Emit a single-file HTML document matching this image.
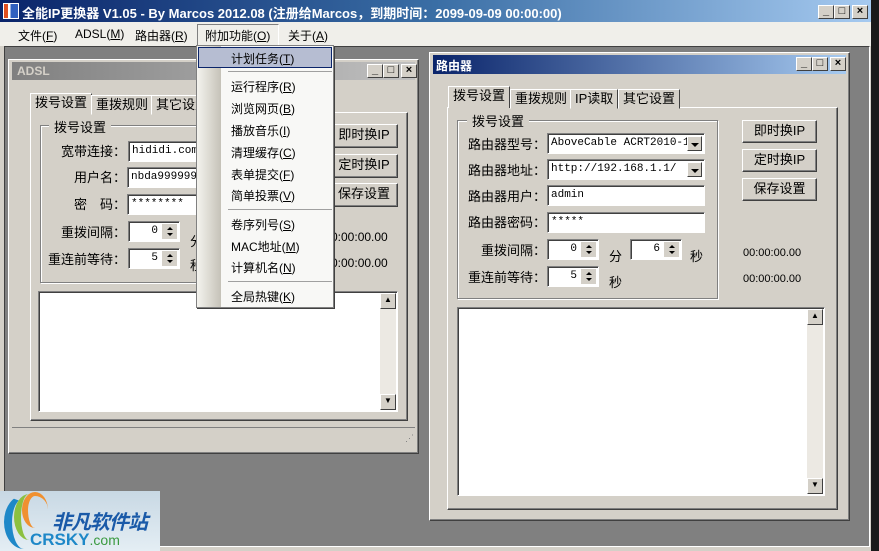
<!DOCTYPE html>
<html><head><meta charset="utf-8"><style>
*{margin:0;padding:0;box-sizing:border-box}
body{width:879px;height:551px;overflow:hidden;background:#d4d0c8;font-family:"Liberation Sans","Noto Sans CJK SC","WenQuanYi Zen Hei",sans-serif;font-size:12px;color:#000;position:relative}
.a{position:absolute}
.raised{background:#d4d0c8;border:1px solid;border-color:#fff #404040 #404040 #fff;box-shadow:inset -1px -1px #808080}
.sunk{background:#fff;border:1px solid;border-color:#808080 #fff #fff #808080;box-shadow:inset 1px 1px #404040}
.btn{position:absolute;background:#d4d0c8;border:1px solid;border-color:#fff #404040 #404040 #fff;box-shadow:inset -1px -1px #808080;text-align:center;font-size:13px;line-height:20px}
.tb{position:absolute;width:16px;height:14px;background:#d4d0c8;border:1px solid;border-color:#fff #404040 #404040 #fff;font-size:11px;line-height:11px;text-align:center;font-weight:bold}
.grp{position:absolute;border:1px solid #808080;box-shadow:1px 1px #fff,inset 1px 1px #fff}
.gl{position:absolute;background:#d4d0c8;padding:0 5px;font-size:13px}
.lbl{position:absolute;font-size:13px;text-align:right}
.in{position:absolute;background:#fff;border:1px solid;border-color:#808080 #fff #fff #808080;box-shadow:inset 1px 1px #404040;font-family:"Liberation Mono","Noto Sans CJK SC",monospace;font-size:11px;line-height:19px;padding-left:3px;white-space:nowrap;overflow:hidden}
.spin{position:absolute;width:16px;right:2px;top:2px;bottom:2px;background:#d4d0c8;border-left:1px solid #fff}
.spin:before{content:"";position:absolute;left:5px;top:3px;border:3px solid transparent;border-bottom:3px solid #000;border-top:0}
.spin:after{content:"";position:absolute;left:5px;bottom:3px;border:3px solid transparent;border-top:3px solid #000;border-bottom:0}
.dd{position:absolute;width:15px;right:2px;top:2px;bottom:2px;background:#d4d0c8;border:1px solid;border-color:#fff #404040 #404040 #fff}
.dd:after{content:"";position:absolute;left:3px;top:6px;border:4px solid transparent;border-top:4px solid #000;border-bottom:0}
.tab{position:absolute;font-size:13px;border:1px solid;border-color:#fff #404040 transparent #fff;background:#d4d0c8;height:20px;line-height:18px;padding:0 4px}
.mi{position:absolute;left:34px;font-size:12px}
</style></head><body>
<div class="a" style="left:871px;top:0;width:8px;height:551px;background:#1a1a1a"></div>
<div class="a" style="left:0;top:0;width:871px;height:22px;background:linear-gradient(90deg,#0a246a,#3a6ea5 50%,#a6caf0)"></div>
<div class="a" style="left:3px;top:3px;width:16px;height:16px;background:linear-gradient(90deg,#e05020 0 30%,#fff 30% 45%,#3060c0 45%);border:1px solid #fff"></div>
<div class="a" style="left:22px;top:3px;color:#fff;font-weight:bold;font-size:13px;white-space:nowrap">全能IP更换器 V1.05 - By Marcos 2012.08 (注册给Marcos，到期时间：2099-09-09 00:00:00)</div>
<div class="tb" style="left:818px;top:5px">_</div><div class="tb" style="left:834px;top:5px">□</div><div class="tb" style="left:852px;top:5px">×</div>
<div class="a" style="left:0;top:22px;width:871px;height:24px;background:#f0efea"></div>
<div class="a" style="left:18px;top:27px;font-size:12px">文件(<u>F</u>)</div>
<div class="a" style="left:75px;top:27px;font-size:12px">ADSL(<u>M</u>)</div>
<div class="a" style="left:135px;top:27px;font-size:12px">路由器(<u>R</u>)</div>
<div class="a" style="left:197px;top:24px;width:82px;height:22px;border:1px solid;border-color:#808080 #fff #fff #808080"></div>
<div class="a" style="left:205px;top:27px;font-size:12px">附加功能(<u>O</u>)</div>
<div class="a" style="left:288px;top:27px;font-size:12px">关于(<u>A</u>)</div>
<div class="a" style="left:4px;top:46px;width:866px;height:501px;background:#808080;border:1px solid;border-color:#404040 #fff #fff #404040"></div>
<div class="a" style="left:0;top:547px;width:871px;height:4px;background:#d4d0c8"></div>

<div class="a raised" style="left:8px;top:59px;width:411px;height:395px"></div>
<div class="a" style="left:12px;top:62px;width:403px;height:18px;background:linear-gradient(90deg,#808080,#c0c0c0)"></div>
<div class="a" style="left:17px;top:64px;color:#d4d0c8;font-weight:bold">ADSL</div>
<div class="tb" style="left:367px;top:64px">_</div><div class="tb" style="left:383px;top:64px">□</div><div class="tb" style="left:401px;top:64px">×</div>
<div class="a raised" style="left:30px;top:112px;width:378px;height:309px"></div>
<div class="tab" style="left:30px;top:93px;height:21px;border-bottom:none">拨号设置</div>
<div class="tab" style="left:91px;top:95px">重拨规则</div>
<div class="tab" style="left:151px;top:95px">其它设置</div>
<div class="grp" style="left:40px;top:125px;width:290px;height:158px"></div>
<div class="gl" style="left:49px;top:117px">拨号设置</div>
<div class="lbl" style="left:50px;top:141px;width:76px">宽带连接：</div>
<div class="in" style="left:128px;top:141px;width:80px;height:21px">hididi.com</div>
<div class="lbl" style="left:50px;top:167px;width:76px">用户名：</div>
<div class="in" style="left:127px;top:167px;width:80px;height:21px">nbda99999999</div>
<div class="lbl" style="left:50px;top:194px;width:76px">密　码：</div>
<div class="in" style="left:127px;top:194px;width:80px;height:21px">********</div>
<div class="lbl" style="left:40px;top:222px;width:86px">重拨间隔：</div>
<div class="in" style="left:128px;top:221px;width:52px;height:21px;text-align:right;padding-right:21px">0<div class="spin"></div></div>
<div class="a" style="left:190px;top:231px;font-size:13px">分</div>
<div class="lbl" style="left:40px;top:249px;width:86px">重连前等待：</div>
<div class="in" style="left:128px;top:248px;width:52px;height:21px;text-align:right;padding-right:21px">5<div class="spin"></div></div>
<div class="a" style="left:190px;top:255px;font-size:13px">秒</div>
<div class="btn" style="left:330px;top:124px;width:68px;height:24px">即时换IP</div>
<div class="btn" style="left:330px;top:154px;width:68px;height:24px">定时换IP</div>
<div class="btn" style="left:330px;top:183px;width:68px;height:24px">保存设置</div>
<div class="a" style="left:331px;top:230px;font-size:12px">0:00:00.00</div>
<div class="a" style="left:331px;top:256px;font-size:12px">0:00:00.00</div>
<div class="a sunk" style="left:38px;top:291px;width:360px;height:121px"></div>
<div class="a" style="left:380px;top:293px;width:16px;height:117px;background:#ece9e3"></div>
<div class="tb" style="left:380px;top:293px;width:16px;height:16px;font-size:8px">▲</div>
<div class="tb" style="left:380px;top:394px;width:16px;height:16px;font-size:8px">▼</div>
<div class="a" style="left:12px;top:427px;width:403px;height:1px;background:#fff;border-top:1px solid #808080"></div>
<div class="a" style="left:405px;top:433px;color:#808080;font-size:9px">⋰</div>

<div class="a raised" style="left:429px;top:52px;width:421px;height:469px"></div>
<div class="a" style="left:433px;top:55px;width:413px;height:19px;background:linear-gradient(90deg,#0a246a,#a6caf0)"></div>
<div class="a" style="left:436px;top:57px;color:#fff;font-weight:bold;font-size:12px">路由器</div>
<div class="tb" style="left:796px;top:57px">_</div><div class="tb" style="left:812px;top:57px">□</div><div class="tb" style="left:830px;top:57px">×</div>
<div class="a raised" style="left:447px;top:107px;width:391px;height:403px"></div>
<div class="tab" style="left:448px;top:86px;height:22px;border-bottom:none">拨号设置</div>
<div class="tab" style="left:510px;top:89px">重拨规则</div>
<div class="tab" style="left:570px;top:89px">IP读取</div>
<div class="tab" style="left:618px;top:89px">其它设置</div>
<div class="grp" style="left:457px;top:120px;width:261px;height:179px"></div>
<div class="gl" style="left:467px;top:111px">拨号设置</div>
<div class="lbl" style="left:460px;top:134px;width:86px">路由器型号：</div>
<div class="in" style="left:547px;top:133px;width:158px;height:21px">AboveCable ACRT2010-11<div class="dd"></div></div>
<div class="lbl" style="left:460px;top:160px;width:86px">路由器地址：</div>
<div class="in" style="left:547px;top:159px;width:158px;height:21px">http://192.168.1.1/<div class="dd"></div></div>
<div class="lbl" style="left:460px;top:186px;width:86px">路由器用户：</div>
<div class="in" style="left:547px;top:185px;width:158px;height:21px">admin</div>
<div class="lbl" style="left:460px;top:212px;width:86px">路由器密码：</div>
<div class="in" style="left:547px;top:212px;width:158px;height:21px">*****</div>
<div class="lbl" style="left:460px;top:240px;width:86px">重拨间隔：</div>
<div class="in" style="left:547px;top:239px;width:52px;height:21px;text-align:right;padding-right:21px">0<div class="spin"></div></div>
<div class="a" style="left:609px;top:246px;font-size:13px">分</div>
<div class="in" style="left:630px;top:239px;width:52px;height:21px;text-align:right;padding-right:21px">6<div class="spin"></div></div>
<div class="a" style="left:690px;top:246px;font-size:13px">秒</div>
<div class="lbl" style="left:460px;top:267px;width:86px">重连前等待：</div>
<div class="in" style="left:547px;top:266px;width:52px;height:21px;text-align:right;padding-right:21px">5<div class="spin"></div></div>
<div class="a" style="left:609px;top:272px;font-size:13px">秒</div>
<div class="btn" style="left:742px;top:120px;width:75px;height:23px">即时换IP</div>
<div class="btn" style="left:742px;top:149px;width:75px;height:23px">定时换IP</div>
<div class="btn" style="left:742px;top:178px;width:75px;height:23px">保存设置</div>
<div class="a" style="left:743px;top:247px;font-size:11px">00:00:00.00</div>
<div class="a" style="left:743px;top:273px;font-size:11px">00:00:00.00</div>
<div class="a sunk" style="left:457px;top:307px;width:368px;height:189px"></div>
<div class="a" style="left:807px;top:309px;width:16px;height:185px;background:#ece9e3"></div>
<div class="tb" style="left:807px;top:309px;width:16px;height:16px;font-size:8px">▲</div>
<div class="tb" style="left:807px;top:478px;width:16px;height:16px;font-size:8px">▼</div>

<div class="a" style="left:196px;top:45px;width:138px;height:263px;background:#f8f8f6;border:1px solid #808080;box-shadow:1px 1px #404040"></div>
<div class="a" style="left:197px;top:46px;width:24px;height:261px;background:linear-gradient(90deg,#f4f3ee,#c5c2b8)"></div>
<div class="a" style="left:198px;top:47px;width:134px;height:21px;background:#b6bdd2;border:1px solid #0a246a"></div>
<div class="mi" style="left:231px;top:50px">计划任务(<u>T</u>)</div>
<div class="a" style="left:228px;top:71px;width:104px;height:1px;background:#a0a0a0"></div>
<div class="mi" style="left:231px;top:78px">运行程序(<u>R</u>)</div>
<div class="mi" style="left:231px;top:100px">浏览网页(<u>B</u>)</div>
<div class="mi" style="left:231px;top:122px">播放音乐(<u>I</u>)</div>
<div class="mi" style="left:231px;top:144px">清理缓存(<u>C</u>)</div>
<div class="mi" style="left:231px;top:166px">表单提交(<u>F</u>)</div>
<div class="mi" style="left:231px;top:187px">简单投票(<u>V</u>)</div>
<div class="a" style="left:228px;top:209px;width:104px;height:1px;background:#a0a0a0"></div>
<div class="mi" style="left:231px;top:216px">卷序列号(<u>S</u>)</div>
<div class="mi" style="left:231px;top:238px">MAC地址(<u>M</u>)</div>
<div class="mi" style="left:231px;top:259px">计算机名(<u>N</u>)</div>
<div class="a" style="left:228px;top:281px;width:104px;height:1px;background:#a0a0a0"></div>
<div class="mi" style="left:231px;top:288px">全局热键(<u>K</u>)</div>

<div class="a" style="left:0;top:491px;width:160px;height:60px;background:linear-gradient(#c8d8e4,#e4eef4)"></div>
<div class="a" style="left:4px;top:495px;width:40px;height:54px;border-radius:50%;border-left:8px solid #1e88c8;border-top:3px solid transparent"></div>
<div class="a" style="left:14px;top:494px;width:30px;height:46px;border-radius:50%;border-left:7px solid #8cc040"></div>
<div class="a" style="left:22px;top:492px;width:26px;height:36px;border-radius:50%;border-left:6px solid #f09030;border-top:4px solid #f09030"></div>
<div class="a" style="left:52px;top:506px;font-size:20px;font-weight:bold;color:#1a5aa8;font-style:italic;letter-spacing:-1px">非凡软件站</div>
<div class="a" style="left:30px;top:530px;font-size:17px;font-weight:bold;color:#1e88c8">CRSKY<span style="font-weight:normal;font-size:14px;color:#3a9a40">.com</span></div>
</body></html>
